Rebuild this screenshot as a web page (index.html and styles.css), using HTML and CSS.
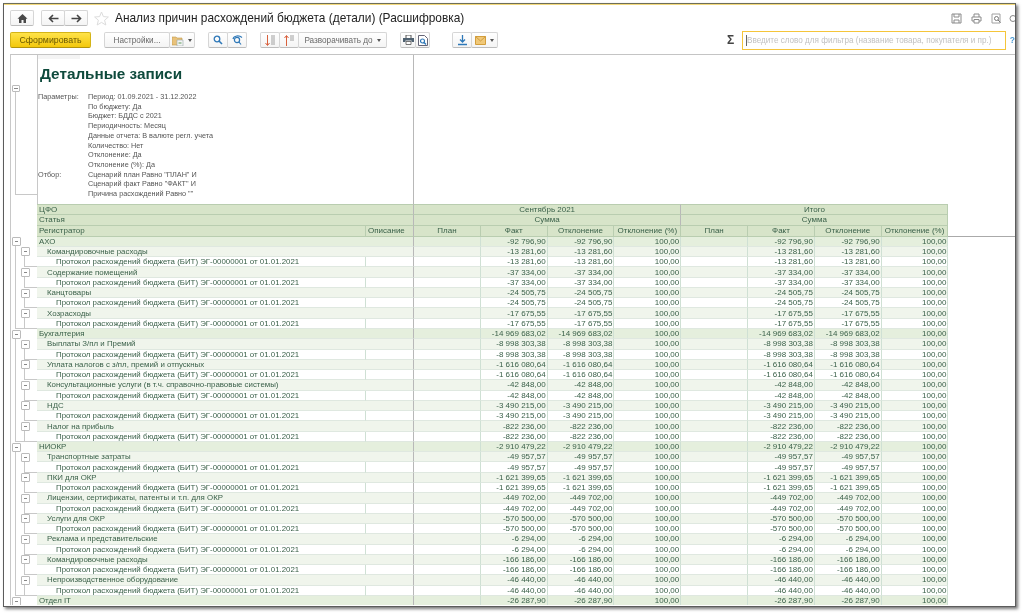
FILE: index.html
```html
<!DOCTYPE html>
<html lang="ru">
<head>
<meta charset="utf-8">
<title>Анализ причин расхождений бюджета (детали) (Расшифровка)</title>
<link rel="stylesheet" href="styles.css">
</head>
<body>
<div class="window">
<header class="toolbar">
  <div class="bar">
    <button class="btn ico w23"><svg width="11" height="11" viewBox="0 0 11 11"><path d="M5.500 1 10.500 5.800H9V10H6.500V7h-2v3H2V5.800H.5z" fill="#4a4a4a"/></svg></button>
    <div class="grp">
      <button class="btn ico w23"><svg width="11" height="9" viewBox="0 0 11 9"><path d="M10.500 4.500H2M5 1 1.500 4.500 5 8" fill="none" stroke="#444" stroke-width="1.600"/></svg></button>
      <button class="btn ico w23"><svg width="11" height="9" viewBox="0 0 11 9"><path d="M.5 4.500H9M6 1l3.500 3.500L6 8" fill="none" stroke="#444" stroke-width="1.600"/></svg></button>
    </div>
    <svg class="star" width="15" height="15" viewBox="0 0 15 15"><path d="M7.500 1 9.400 5.600l5 .4-3.800 3.200 1.200 4.800-4.300-2.600L3.200 14l1.200-4.800L.6 6l5-.4z" fill="#fff" stroke="#dcdcdc"/></svg>
    <h1 class="title">Анализ причин расхождений бюджета (детали) (Расшифровка)</h1>
    <div class="tools">
      <svg class="t1" width="11" height="11" viewBox="0 0 11 11"><path d="M1 1h9v9H1zM3 1v3h5V1M3 10V7h5v3" fill="none" stroke="#8a8a8a"/></svg>
      <svg class="t2" width="11" height="11" viewBox="0 0 11 11"><path d="M3 4V1h5v3M3 8H1V4h9v4H8M3 6.500h5V10H3z" fill="none" stroke="#8a8a8a"/></svg>
      <svg class="t3" width="11" height="11" viewBox="0 0 11 11"><path d="M1 1h8v9H1z" fill="none" stroke="#a0a0a0"/><circle cx="5.500" cy="5.500" r="2" fill="none" stroke="#777"/><path d="M7 7l2.500 2.500" stroke="#777"/></svg>
      <svg class="t4" width="6" height="11" viewBox="0 0 6 11"><circle cx="4" cy="5.500" r="3" fill="none" stroke="#888"/></svg>
    </div>
  </div>
  <div class="bar second">
    <button class="btn primary">Сформировать</button>
    <div class="grp">
      <button class="btn txt w65">Настройки...</button>
      <button class="btn ico w26"><svg width="12" height="11" viewBox="0 0 12 11"><path d="M0 2h4l1 1h5v7H0z" fill="#e9c27b" stroke="#c49a4c" stroke-width=".6"/><path d="M5 5h6v6H5z" fill="#f4f4f4" stroke="#9aa" stroke-width=".6"/><path d="M6.500 8h3" stroke="#5a9a5a"/></svg><i class="caret"></i></button>
    </div>
    <div class="grp">
      <button class="btn ico w19"><svg width="10" height="10" viewBox="0 0 10 10"><circle cx="4" cy="4" r="2.800" fill="none" stroke="#2e78b8" stroke-width="1.300"/><path d="M6 6l3 3" stroke="#2e78b8" stroke-width="1.600"/></svg></button>
      <button class="btn ico w19"><svg width="11" height="10" viewBox="0 0 11 10"><circle cx="5" cy="5" r="2.600" fill="none" stroke="#2e78b8" stroke-width="1.200"/><path d="M7 7l2 2.500M1 4c1-3.500 6-4 9-1.500" fill="none" stroke="#2e78b8" stroke-width="1.200"/></svg></button>
    </div>
    <div class="grp">
      <button class="btn ico w19"><svg width="11" height="11" viewBox="0 0 11 11"><path d="M2.500 0v10M.5 8l2 2.500 2-2.500" fill="none" stroke="#d9603c"/><path d="M6 1h4M6 3h4M6 5h4M6 7h4M6 9h4" stroke="#a0a0a0"/></svg></button>
      <button class="btn ico w19"><svg width="11" height="11" viewBox="0 0 11 11"><path d="M2.500 11V1M.5 3l2-2.500 2 2.500" fill="none" stroke="#d9603c"/><path d="M6 1h4M6 3h4M6 5h4" stroke="#a0a0a0"/></svg></button>
      <button class="btn txt w89">Разворачивать до<i class="caret"></i></button>
    </div>
    <div class="grp">
      <button class="btn ico w15"><svg width="11" height="10" viewBox="0 0 11 10"><path d="M3 3V0h5v3" fill="none" stroke="#555"/><path d="M0 3h11v4H8.500V5.500h-6V7H0z" fill="#4f6170"/><path d="M3 6.500h5v3H3z" fill="#fff" stroke="#555" stroke-width=".8"/></svg></button>
      <button class="btn ico w14"><svg width="10" height="11" viewBox="0 0 10 11"><path d="M.5.500h6l3 3v7h-9z" fill="#fff" stroke="#667"/><circle cx="4.500" cy="6" r="2" fill="none" stroke="#2e78b8" stroke-width="1.200"/><path d="M6 7.500l2 2" stroke="#2e78b8" stroke-width="1.400"/></svg></button>
    </div>
    <div class="grp ml22">
      <button class="btn ico w19"><svg width="11" height="11" viewBox="0 0 11 11"><path d="M5.500 0v7M3 4.500 5.500 7 8 4.500" fill="none" stroke="#2e78b8" stroke-width="1.300"/><path d="M1 9.500h9" stroke="#2e78b8" stroke-width="1.500"/></svg></button>
      <button class="btn ico w27"><svg width="11" height="9" viewBox="0 0 11 9"><path d="M.5.500h10v8H.5z" fill="#f0c878" stroke="#d39e3c"/><path d="M.5.500l5 4.500 5-4.500" fill="none" stroke="#c28a2a" stroke-width=".7"/></svg><i class="caret"></i></button>
    </div>
    <div class="search">
      <span class="sigma">Σ</span>
      <div class="filter"><i class="cursor"></i><span>Введите слово для фильтра (название товара, покупателя и пр.)</span></div>
      <span class="help">?</span>
    </div>
  </div>
</header>
<main class="report">
  <div class="report-head">
    <div class="head-gutter"><i class="minus"></i><i class="bracket"></i></div>
    <div class="head-box">
      <div class="head-tab"></div>
      <h2 class="report-title">Детальные записи</h2>
      <dl class="params">
        <dt>Параметры:</dt><dd>Период: 01.09.2021 - 31.12.2022<br>По бюджету: Да<br>Бюджет: БДДС с 2021<br>Периодичность: Месяц<br>Данные отчета: В валюте регл. учета<br>Количество: Нет<br>Отклонение: Да<br>Отклонение (%): Да</dd>
        <dt>Отбор:</dt><dd>Сценарий план Равно "ПЛАН" И<br>Сценарий факт Равно "ФАКТ" И<br>Причина расхождений Равно ""</dd>
      </dl>
    </div>
  </div>
  <table class="grid">
    <colgroup><col class="c-g"><col class="c-r"><col class="c-d"><col class="c-n" span="8"><col class="c-x"></colgroup>
    <thead>
      <tr class="h"><td class="g"></td><td colspan="2">ЦФО</td><td colspan="4">Сентябрь 2021</td><td colspan="4">Итого</td></tr>
      <tr class="h"><td class="g"></td><td colspan="2">Статья</td><td colspan="4">Сумма</td><td colspan="4">Сумма</td></tr>
      <tr class="h h3"><td class="g"></td><td>Регистратор</td><td class="desc">Описание</td><td>План</td><td>Факт</td><td>Отклонение</td><td>Отклонение (%)</td><td>План</td><td>Факт</td><td>Отклонение</td><td>Отклонение (%)</td><td class="x"></td></tr>
    </thead>
    <tbody>
<tr class="l0"><td class="g"></td><td>АХО</td><td></td><td></td><td>-92 796,90</td><td>-92 796,90</td><td>100,00</td><td></td><td>-92 796,90</td><td>-92 796,90</td><td>100,00</td></tr>
<tr class="l1"><td class="g"></td><td>Командировочные расходы</td><td></td><td></td><td>-13 281,60</td><td>-13 281,60</td><td>100,00</td><td></td><td>-13 281,60</td><td>-13 281,60</td><td>100,00</td></tr>
<tr class="l2"><td class="g"></td><td>Протокол расхождений бюджета (БИТ) ЭГ-00000001 от 01.01.2021</td><td></td><td></td><td>-13 281,60</td><td>-13 281,60</td><td>100,00</td><td></td><td>-13 281,60</td><td>-13 281,60</td><td>100,00</td></tr>
<tr class="l1"><td class="g"></td><td>Содержание помещений</td><td></td><td></td><td>-37 334,00</td><td>-37 334,00</td><td>100,00</td><td></td><td>-37 334,00</td><td>-37 334,00</td><td>100,00</td></tr>
<tr class="l2"><td class="g"></td><td>Протокол расхождений бюджета (БИТ) ЭГ-00000001 от 01.01.2021</td><td></td><td></td><td>-37 334,00</td><td>-37 334,00</td><td>100,00</td><td></td><td>-37 334,00</td><td>-37 334,00</td><td>100,00</td></tr>
<tr class="l1"><td class="g"></td><td>Канцтовары</td><td></td><td></td><td>-24 505,75</td><td>-24 505,75</td><td>100,00</td><td></td><td>-24 505,75</td><td>-24 505,75</td><td>100,00</td></tr>
<tr class="l2"><td class="g"></td><td>Протокол расхождений бюджета (БИТ) ЭГ-00000001 от 01.01.2021</td><td></td><td></td><td>-24 505,75</td><td>-24 505,75</td><td>100,00</td><td></td><td>-24 505,75</td><td>-24 505,75</td><td>100,00</td></tr>
<tr class="l1"><td class="g"></td><td>Хозрасходы</td><td></td><td></td><td>-17 675,55</td><td>-17 675,55</td><td>100,00</td><td></td><td>-17 675,55</td><td>-17 675,55</td><td>100,00</td></tr>
<tr class="l2 end"><td class="g"></td><td>Протокол расхождений бюджета (БИТ) ЭГ-00000001 от 01.01.2021</td><td></td><td></td><td>-17 675,55</td><td>-17 675,55</td><td>100,00</td><td></td><td>-17 675,55</td><td>-17 675,55</td><td>100,00</td></tr>
<tr class="l0"><td class="g"></td><td>Бухгалтерия</td><td></td><td></td><td>-14 969 683,02</td><td>-14 969 683,02</td><td>100,00</td><td></td><td>-14 969 683,02</td><td>-14 969 683,02</td><td>100,00</td></tr>
<tr class="l1"><td class="g"></td><td>Выплаты З/пл и Премий</td><td></td><td></td><td>-8 998 303,38</td><td>-8 998 303,38</td><td>100,00</td><td></td><td>-8 998 303,38</td><td>-8 998 303,38</td><td>100,00</td></tr>
<tr class="l2"><td class="g"></td><td>Протокол расхождений бюджета (БИТ) ЭГ-00000001 от 01.01.2021</td><td></td><td></td><td>-8 998 303,38</td><td>-8 998 303,38</td><td>100,00</td><td></td><td>-8 998 303,38</td><td>-8 998 303,38</td><td>100,00</td></tr>
<tr class="l1"><td class="g"></td><td>Уплата налогов с з/пл, премий и отпускных</td><td></td><td></td><td>-1 616 080,64</td><td>-1 616 080,64</td><td>100,00</td><td></td><td>-1 616 080,64</td><td>-1 616 080,64</td><td>100,00</td></tr>
<tr class="l2"><td class="g"></td><td>Протокол расхождений бюджета (БИТ) ЭГ-00000001 от 01.01.2021</td><td></td><td></td><td>-1 616 080,64</td><td>-1 616 080,64</td><td>100,00</td><td></td><td>-1 616 080,64</td><td>-1 616 080,64</td><td>100,00</td></tr>
<tr class="l1"><td class="g"></td><td>Консультационные услуги (в т.ч. справочно-правовые системы)</td><td></td><td></td><td>-42 848,00</td><td>-42 848,00</td><td>100,00</td><td></td><td>-42 848,00</td><td>-42 848,00</td><td>100,00</td></tr>
<tr class="l2"><td class="g"></td><td>Протокол расхождений бюджета (БИТ) ЭГ-00000001 от 01.01.2021</td><td></td><td></td><td>-42 848,00</td><td>-42 848,00</td><td>100,00</td><td></td><td>-42 848,00</td><td>-42 848,00</td><td>100,00</td></tr>
<tr class="l1"><td class="g"></td><td>НДС</td><td></td><td></td><td>-3 490 215,00</td><td>-3 490 215,00</td><td>100,00</td><td></td><td>-3 490 215,00</td><td>-3 490 215,00</td><td>100,00</td></tr>
<tr class="l2"><td class="g"></td><td>Протокол расхождений бюджета (БИТ) ЭГ-00000001 от 01.01.2021</td><td></td><td></td><td>-3 490 215,00</td><td>-3 490 215,00</td><td>100,00</td><td></td><td>-3 490 215,00</td><td>-3 490 215,00</td><td>100,00</td></tr>
<tr class="l1"><td class="g"></td><td>Налог на прибыль</td><td></td><td></td><td>-822 236,00</td><td>-822 236,00</td><td>100,00</td><td></td><td>-822 236,00</td><td>-822 236,00</td><td>100,00</td></tr>
<tr class="l2 end"><td class="g"></td><td>Протокол расхождений бюджета (БИТ) ЭГ-00000001 от 01.01.2021</td><td></td><td></td><td>-822 236,00</td><td>-822 236,00</td><td>100,00</td><td></td><td>-822 236,00</td><td>-822 236,00</td><td>100,00</td></tr>
<tr class="l0"><td class="g"></td><td>НИОКР</td><td></td><td></td><td>-2 910 479,22</td><td>-2 910 479,22</td><td>100,00</td><td></td><td>-2 910 479,22</td><td>-2 910 479,22</td><td>100,00</td></tr>
<tr class="l1"><td class="g"></td><td>Транспортные затраты</td><td></td><td></td><td>-49 957,57</td><td>-49 957,57</td><td>100,00</td><td></td><td>-49 957,57</td><td>-49 957,57</td><td>100,00</td></tr>
<tr class="l2"><td class="g"></td><td>Протокол расхождений бюджета (БИТ) ЭГ-00000001 от 01.01.2021</td><td></td><td></td><td>-49 957,57</td><td>-49 957,57</td><td>100,00</td><td></td><td>-49 957,57</td><td>-49 957,57</td><td>100,00</td></tr>
<tr class="l1"><td class="g"></td><td>ПКИ для ОКР</td><td></td><td></td><td>-1 621 399,65</td><td>-1 621 399,65</td><td>100,00</td><td></td><td>-1 621 399,65</td><td>-1 621 399,65</td><td>100,00</td></tr>
<tr class="l2"><td class="g"></td><td>Протокол расхождений бюджета (БИТ) ЭГ-00000001 от 01.01.2021</td><td></td><td></td><td>-1 621 399,65</td><td>-1 621 399,65</td><td>100,00</td><td></td><td>-1 621 399,65</td><td>-1 621 399,65</td><td>100,00</td></tr>
<tr class="l1"><td class="g"></td><td>Лицензии, сертификаты, патенты и т.п. для ОКР</td><td></td><td></td><td>-449 702,00</td><td>-449 702,00</td><td>100,00</td><td></td><td>-449 702,00</td><td>-449 702,00</td><td>100,00</td></tr>
<tr class="l2"><td class="g"></td><td>Протокол расхождений бюджета (БИТ) ЭГ-00000001 от 01.01.2021</td><td></td><td></td><td>-449 702,00</td><td>-449 702,00</td><td>100,00</td><td></td><td>-449 702,00</td><td>-449 702,00</td><td>100,00</td></tr>
<tr class="l1"><td class="g"></td><td>Услуги для ОКР</td><td></td><td></td><td>-570 500,00</td><td>-570 500,00</td><td>100,00</td><td></td><td>-570 500,00</td><td>-570 500,00</td><td>100,00</td></tr>
<tr class="l2"><td class="g"></td><td>Протокол расхождений бюджета (БИТ) ЭГ-00000001 от 01.01.2021</td><td></td><td></td><td>-570 500,00</td><td>-570 500,00</td><td>100,00</td><td></td><td>-570 500,00</td><td>-570 500,00</td><td>100,00</td></tr>
<tr class="l1"><td class="g"></td><td>Реклама и представительские</td><td></td><td></td><td>-6 294,00</td><td>-6 294,00</td><td>100,00</td><td></td><td>-6 294,00</td><td>-6 294,00</td><td>100,00</td></tr>
<tr class="l2"><td class="g"></td><td>Протокол расхождений бюджета (БИТ) ЭГ-00000001 от 01.01.2021</td><td></td><td></td><td>-6 294,00</td><td>-6 294,00</td><td>100,00</td><td></td><td>-6 294,00</td><td>-6 294,00</td><td>100,00</td></tr>
<tr class="l1"><td class="g"></td><td>Командировочные расходы</td><td></td><td></td><td>-166 186,00</td><td>-166 186,00</td><td>100,00</td><td></td><td>-166 186,00</td><td>-166 186,00</td><td>100,00</td></tr>
<tr class="l2"><td class="g"></td><td>Протокол расхождений бюджета (БИТ) ЭГ-00000001 от 01.01.2021</td><td></td><td></td><td>-166 186,00</td><td>-166 186,00</td><td>100,00</td><td></td><td>-166 186,00</td><td>-166 186,00</td><td>100,00</td></tr>
<tr class="l1"><td class="g"></td><td>Непроизводственное оборудование</td><td></td><td></td><td>-46 440,00</td><td>-46 440,00</td><td>100,00</td><td></td><td>-46 440,00</td><td>-46 440,00</td><td>100,00</td></tr>
<tr class="l2 end"><td class="g"></td><td>Протокол расхождений бюджета (БИТ) ЭГ-00000001 от 01.01.2021</td><td></td><td></td><td>-46 440,00</td><td>-46 440,00</td><td>100,00</td><td></td><td>-46 440,00</td><td>-46 440,00</td><td>100,00</td></tr>
<tr class="l0"><td class="g"></td><td>Отдел IT</td><td></td><td></td><td>-26 287,90</td><td>-26 287,90</td><td>100,00</td><td></td><td>-26 287,90</td><td>-26 287,90</td><td>100,00</td></tr>
    </tbody>
  </table>
</main>
</div>
</body>
</html>
```
FILE: styles.css
```css
* { box-sizing: border-box; }
html, body { margin: 0; height: 100%; background: #fff; overflow: hidden; }
body { padding: 3px 0 0 3px; font-family: "Liberation Sans", Arial, sans-serif; color: #333; }

.window {
  --ln: #c8c8c8;
  width: 1013px;
  height: 604px;
  border: 1px solid #5c5c5c;
  border-top-color: #6e6e58;
  background: #fff;
  box-shadow: 2px 2px 3px #777;
  overflow: hidden;
  filter: blur(.3px);
}

.toolbar { border-top: 1px solid #f3d97c; padding: 5px 0 6px 6px; }
.bar { display: flex; align-items: center; height: 16px; }
.second { margin-top: 6px; gap: 13px; }

.btn {
  display: flex; align-items: center; justify-content: center;
  height: 16px; padding: 0; margin: 0;
  border: 1px solid #d6d6d6; border-bottom-color: #bcbcbc; border-radius: 2px;
  background: linear-gradient(#fff, #f4f4f4);
  font: 8.200px "Liberation Sans", Arial, sans-serif; color: #6a6a6a;
  white-space: nowrap;
}
.grp { display: flex; margin-left: 0; }
.bar > .grp:nth-child(2) { margin-left: 7px; }
.second > .grp:nth-child(2) { margin-left: 0; }
.grp .btn + .btn { margin-left: -1px; }
.ml22 { margin-left: 9px; }
.w23 { width: 24px; } .w26 { width: 26px; } .w19 { width: 20px; } .w27 { width: 27px; }
.w65 { width: 66px; } .w89 { width: 89px; } .w15 { width: 16px; } .w14 { width: 15px; }
.primary {
  width: 81px; font-size: 8.800px; color: #6a5800;
  background: linear-gradient(#ffe34a, #f3c80c);
  border-color: #d4b417; border-bottom-color: #b2940c;
}
.caret { display: inline-block; width: 0; height: 0; margin-left: 4px; border: 2px solid transparent; border-top: 3px solid #555; border-bottom: 0; }
.star { margin-left: 6px; flex: none; }
.title { margin: 0 0 0 6px; font-size: 11.900px; font-weight: 400; color: #222; white-space: nowrap; }

.tools { margin-left: auto; display: flex; align-items: center; }
.t2 { margin-left: 9px; } .t3 { margin-left: 9px; } .t4 { margin-left: 7px; }

.search { margin-left: auto; display: flex; align-items: center; }
.sigma { font-size: 12px; font-weight: 700; color: #444; width: 15px; }
.filter {
  display: flex; align-items: center; width: 264px; height: 19px; padding-left: 3px;
  border: 1px solid #f5c53a; font-size: 8.130px; color: #c2c2c2; white-space: nowrap;
}
.cursor { width: 1px; height: 11px; background: #666; flex: none; }
.help { width: 9px; text-align: right; font-size: 8.500px; color: #4a9ad4; font-weight: 700; }

.report { margin-left: 6px; border-top: 1px solid #c4c4c4; border-left: 1px solid var(--ln); height: 551px; overflow: hidden; }
.report-head { display: flex; height: 149px; }
.head-gutter { width: 26px; flex: none; padding: 30px 0 0 1px; }
.minus { display: block; width: 8px; height: 7px; border: 1px solid #bbb; border-radius: 1px; background: linear-gradient(#888,#888) center/4px 1px no-repeat #fff; }
.bracket { display: block; width: 22px; height: 103px; margin-left: 3px; border-left: 1px solid var(--ln); border-bottom: 1px solid var(--ln); }
.head-box { width: 377px; border-left: 1px solid var(--ln); border-right: 1px solid #b8b8b8; flex: none; }
.head-tab { width: 42px; height: 4px; background: #f4f4f4; }
.report-title { margin: 5px 0 0 2px; font-size: 15.300px; line-height: 20px; font-weight: 700; color: #0e4a3c; }
.params { display: grid; grid-template-columns: 50px 1fr; margin: 8px 0 0 0; font-size: 7.250px; line-height: 9.700px; color: #555; }
.params dt, .params dd { margin: 0; }

.grid { table-layout: fixed; border-collapse: separate; border-spacing: 0; width: 1004.400px; font-size: 8px; color: #3a6049; }
.c-g { width: 26px; } .c-r { width: 329px; } .c-d { width: 48px; } .c-n { width: 66.800px; } .c-x { width: 67px; }
.grid td { height: 10.280px; padding: 0; line-height: 9px; overflow: hidden; white-space: nowrap; border-right: 1px solid #cfe0d4; border-bottom: 1px solid #dfe8e0; }
.grid td:nth-child(n+4) { text-align: right; padding-right: 1px; }
.grid td:nth-child(3) { border-right-color: #b8b8b8; }
.grid td:nth-child(2) { padding-left: 2px; font-size: 7.870px; }
.grid td.g { border: 0; background-repeat: no-repeat; }

.h td { height: 10.800px; background: #d7e4c9; text-align: center; border-right-color: #b9cdb0; border-bottom-color: #b9cdb0; }
.h td:nth-child(2) { text-align: left; font-size: 8px; }
.h td:nth-child(n+3) { text-align: center; padding-right: 0; }
.h td.desc { text-align: left; padding-left: 2px; }
.h:not(.h3) td:nth-child(2) { border-right-color: #b8b8b8; }
.h td.x { background: none; border-right: 0; border-bottom: 1px solid #aaa; }
.h td.g { background: none; }
.h:first-child td { border-top: 1px solid #b9cdb0; }
.h:first-child td.g { border-top: 0; }

.l0 td { background: #e5efdd; }
.l1 td { background: #f0f5ec; }
.l0 td:nth-child(2), .l1 td:nth-child(2) { border-right: 0; }
.l1 td:nth-child(2) { padding-left: 10px; }
.l2 td:nth-child(2) { padding-left: 19px; }
.grid td.g { background-color: #fff; }

.g::before { content: ""; display: block; width: 7px; height: 7px; border: 1px solid #bbb; border-radius: 1px; background: linear-gradient(#888,#888) center/3px 1px no-repeat #fff; }
.l0 .g::before { margin-left: 1px; }
.l1 .g::before { margin-left: 10px; }
.h .g::before, .l2 .g::before { display: none; }

.grid .l0 .g { background-image: linear-gradient(var(--ln),var(--ln)); background-position: 4px 8px; background-size: 1px 100%; }
.grid .l1 .g { background-image: linear-gradient(var(--ln),var(--ln)), linear-gradient(var(--ln),var(--ln)); background-position: 4px 0, 13px 8px; background-size: 1px 100%, 1px 100%; }
.grid .l2 .g { background-image: linear-gradient(var(--ln),var(--ln)), linear-gradient(var(--ln),var(--ln)), linear-gradient(var(--ln),var(--ln)); background-position: 4px 0, 13px 0, 13px 100%; background-size: 1px 100%, 1px 100%, 13px 1px; }
.grid .l2.end .g { background-image: linear-gradient(var(--ln),var(--ln)), linear-gradient(var(--ln),var(--ln)), linear-gradient(var(--ln),var(--ln)); background-position: 4px 0, 13px 0, 4px 100%; background-size: 1px 100%, 1px 100%, 22px 1px; }
```
